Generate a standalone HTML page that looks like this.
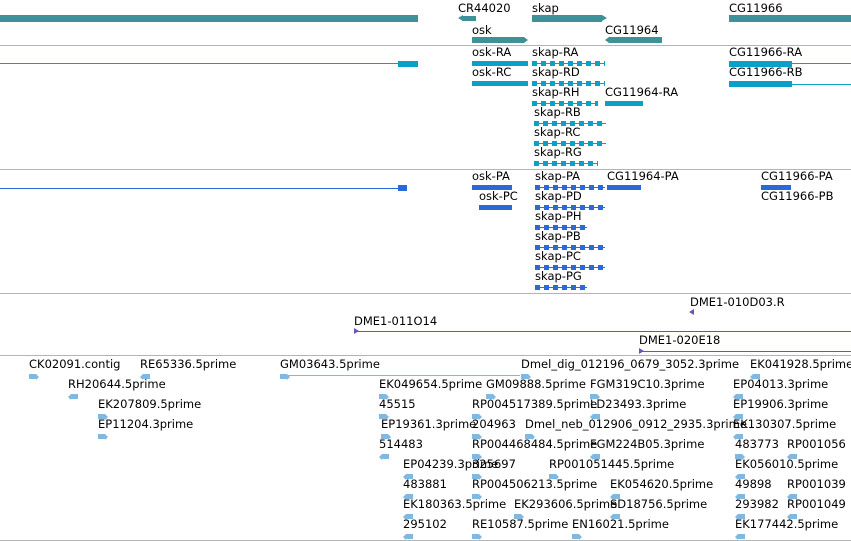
<!DOCTYPE html>
<html><head><meta charset="utf-8"><style>
*{margin:0;padding:0;box-sizing:border-box}
body{width:851px;height:541px;background:#fff;position:relative;overflow:hidden;font-family:"DejaVu Sans","Liberation Sans",sans-serif;font-size:11.5px;color:#000}
.t{position:absolute;white-space:nowrap;line-height:14px}
.b{position:absolute}
.hl{position:absolute;left:0;width:851px;height:1px;background:#b4b4b4}
.g{background:#3f9198}
.tr{background:#0aa0c8}
.p{background:#2a6ad8}
.d{background:#7050c0}
.e{background:#80b8e0}
.ar{position:absolute;width:0;height:0;border-top:3px solid transparent;border-bottom:3px solid transparent}
.ex{background:repeating-linear-gradient(90deg,currentColor 0 5px,transparent 5px 9px)}
</style></head><body>
<div class="b g" style="left:0;top:15px;width:418px;height:7px"></div>
<div class="t" style="left:458px;top:1px">CR44020</div>
<div class="b g" style="left:462px;top:16px;width:14px;height:5px"></div><div class="ar" style="left:458px;top:15px;border-right:5px solid #3f9198"></div>
<div class="t" style="left:532px;top:1px">skap</div>
<div class="b g" style="left:532px;top:15px;width:70px;height:7px"></div><div class="ar" style="left:602px;top:15px;border-top-width:3.5px;border-bottom-width:3.5px;border-left:5px solid #3f9198"></div>
<div class="t" style="left:472px;top:23px">osk</div>
<div class="b g" style="left:472px;top:37px;width:52px;height:6px"></div><div class="ar" style="left:524px;top:37px;border-left:4px solid #3f9198"></div>
<div class="t" style="left:605px;top:23px">CG11964</div>
<div class="b g" style="left:609px;top:37px;width:53px;height:6px"></div><div class="ar" style="left:605px;top:37px;border-right:4px solid #3f9198"></div>
<div class="t" style="left:729px;top:1px">CG11966</div>
<div class="b g" style="left:729px;top:15px;width:122px;height:7px"></div>
<div class="hl" style="top:45px"></div>
<div class="b tr" style="left:0;top:63px;width:400px;height:1px"></div>
<div class="b tr" style="left:398px;top:61px;width:20px;height:6px"></div>
<div class="t" style="left:472px;top:45px">osk-RA</div>
<div class="b tr" style="left:472px;top:61px;width:56px;height:5px"></div>
<div class="t" style="left:472px;top:65px">osk-RC</div>
<div class="b tr" style="left:472px;top:81px;width:56px;height:5px"></div>
<div class="t" style="left:532px;top:45px">skap-RA</div>
<div class="b tr" style="left:532px;top:63px;width:73px;height:1px"></div><div class="b ex" style="left:532px;top:61px;width:73px;height:5px;color:#0aa0c8"></div>
<div class="t" style="left:532px;top:65px">skap-RD</div>
<div class="b tr" style="left:532px;top:83px;width:73px;height:1px"></div><div class="b ex" style="left:532px;top:81px;width:73px;height:5px;color:#0aa0c8"></div>
<div class="t" style="left:532px;top:85px">skap-RH</div>
<div class="b tr" style="left:532px;top:103px;width:66px;height:1px"></div><div class="b ex" style="left:532px;top:101px;width:66px;height:5px;color:#0aa0c8"></div>
<div class="t" style="left:605px;top:85px">CG11964-RA</div>
<div class="b tr" style="left:605px;top:101px;width:38px;height:5px"></div>
<div class="t" style="left:534px;top:105px">skap-RB</div>
<div class="b tr" style="left:534px;top:123px;width:72px;height:1px"></div><div class="b ex" style="left:534px;top:121px;width:72px;height:5px;color:#0aa0c8"></div>
<div class="t" style="left:534px;top:125px">skap-RC</div>
<div class="b tr" style="left:534px;top:143px;width:72px;height:1px"></div><div class="b ex" style="left:534px;top:141px;width:72px;height:5px;color:#0aa0c8"></div>
<div class="t" style="left:534px;top:145px">skap-RG</div>
<div class="b tr" style="left:534px;top:163px;width:64px;height:1px"></div><div class="b ex" style="left:534px;top:161px;width:64px;height:5px;color:#0aa0c8"></div>
<div class="t" style="left:729px;top:45px">CG11966-RA</div>
<div class="b tr" style="left:729px;top:61px;width:63px;height:6px"></div><div class="b tr" style="left:792px;top:63px;width:59px;height:1px"></div>
<div class="t" style="left:729px;top:65px">CG11966-RB</div>
<div class="b tr" style="left:729px;top:81px;width:63px;height:6px"></div><div class="b tr" style="left:792px;top:84px;width:59px;height:1px"></div>
<div class="hl" style="top:169px"></div>
<div class="b p" style="left:0;top:188px;width:400px;height:1px"></div>
<div class="b p" style="left:398px;top:185px;width:9px;height:6px"></div>
<div class="t" style="left:472px;top:169px">osk-PA</div>
<div class="b p" style="left:472px;top:185px;width:40px;height:5px"></div>
<div class="t" style="left:479px;top:189px">osk-PC</div>
<div class="b p" style="left:479px;top:205px;width:33px;height:5px"></div>
<div class="t" style="left:535px;top:169px">skap-PA</div>
<div class="b p" style="left:535px;top:187px;width:70px;height:1px"></div><div class="b ex" style="left:535px;top:185px;width:70px;height:5px;color:#2a6ad8"></div>
<div class="t" style="left:535px;top:189px">skap-PD</div>
<div class="b p" style="left:535px;top:207px;width:70px;height:1px"></div><div class="b ex" style="left:535px;top:205px;width:70px;height:5px;color:#2a6ad8"></div>
<div class="t" style="left:535px;top:209px">skap-PH</div>
<div class="b p" style="left:535px;top:227px;width:52px;height:1px"></div><div class="b ex" style="left:535px;top:225px;width:52px;height:5px;color:#2a6ad8"></div>
<div class="t" style="left:535px;top:229px">skap-PB</div>
<div class="b p" style="left:535px;top:247px;width:70px;height:1px"></div><div class="b ex" style="left:535px;top:245px;width:70px;height:5px;color:#2a6ad8"></div>
<div class="t" style="left:535px;top:249px">skap-PC</div>
<div class="b p" style="left:535px;top:267px;width:70px;height:1px"></div><div class="b ex" style="left:535px;top:265px;width:70px;height:5px;color:#2a6ad8"></div>
<div class="t" style="left:535px;top:269px">skap-PG</div>
<div class="b p" style="left:535px;top:287px;width:52px;height:1px"></div><div class="b ex" style="left:535px;top:285px;width:52px;height:5px;color:#2a6ad8"></div>
<div class="t" style="left:607px;top:169px">CG11964-PA</div>
<div class="b p" style="left:607px;top:185px;width:34px;height:5px"></div>
<div class="t" style="left:761px;top:169px">CG11966-PA</div>
<div class="b p" style="left:761px;top:185px;width:30px;height:5px"></div>
<div class="t" style="left:761px;top:189px">CG11966-PB</div>
<div class="hl" style="top:293px"></div>
<div class="t" style="left:690px;top:295px">DME1-010D03.R</div>
<div class="ar" style="left:689px;top:309px;border-right:5px solid #7050c0"></div>
<div class="t" style="left:354px;top:314px">DME1-011O14</div>
<div class="b d" style="left:354px;top:331px;width:497px;height:1px"></div><div class="ar" style="left:354px;top:328px;border-left:5px solid #7050c0"></div>
<div class="t" style="left:639px;top:333px">DME1-020E18</div>
<div class="b d" style="left:639px;top:351px;width:212px;height:1px"></div><div class="ar" style="left:639px;top:348px;border-left:5px solid #7050c0"></div>
<div class="hl" style="top:355px"></div>
<div class="hl" style="top:540px"></div>
<div class="b e" style="left:280px;top:375px;width:240px;height:1px"></div>
<div id="est"></div>
<script>
var rows=[
[[29,"CK02091.contig",1],[140,"RE65336.5prime",0],[280,"GM03643.5prime",1],[521,"Dmel_dig_012196_0679_3052.3prime",1],[750,"EK041928.5prime",0]],
[[68,"RH20644.5prime",0],[379,"EK049654.5prime",1],[486,"GM09888.5prime",1],[590,"FGM319C10.3prime",1],[733,"EP04013.3prime",0]],
[[98,"EK207809.5prime",1],[379,"45515",1],[472,"RP004517389.5prime",1],[590,"LD23493.3prime",0],[733,"EP19906.3prime",0]],
[[98,"EP11204.3prime",1],[381,"EP19361.3prime",1],[472,"204963",1],[525,"Dmel_neb_012906_0912_2935.3prime",1],[733,"EK130307.5prime",0]],
[[379,"514483",0],[472,"RP004468484.5prime",1],[590,"FGM224B05.3prime",0],[735,"483773",1],[787,"RP001056",0]],
[[403,"EP04239.3prime",0],[472,"325697",1],[549,"RP001051445.5prime",1],[735,"EK056010.5prime",0]],
[[403,"483881",0],[472,"RP004506213.5prime",1],[610,"EK054620.5prime",0],[735,"49898",0],[787,"RP001039",0]],
[[403,"EK180363.5prime",0],[514,"EK293606.5prime",1],[610,"SD18756.5prime",0],[735,"293982",0],[787,"RP001049",0]],
[[403,"295102",0],[472,"RE10587.5prime",1],[572,"EN16021.5prime",1],[735,"EK177442.5prime",0]]];
var h="";
rows.forEach(function(r,i){var y=357+i*20;r.forEach(function(e){
h+='<div class="t" style="left:'+e[0]+'px;top:'+y+'px">'+e[1]+'</div>';
var ay=y+17;
if(e[2])h+='<div class="b e" style="left:'+e[0]+'px;top:'+ay+'px;width:7px;height:5px"></div><div class="ar" style="left:'+(e[0]+7)+'px;top:'+(ay-0.5)+'px;border-left:3px solid #80b8e0"></div>';
else h+='<div class="ar" style="left:'+e[0]+'px;top:'+(ay-0.5)+'px;border-right:3px solid #80b8e0"></div><div class="b e" style="left:'+(e[0]+3)+'px;top:'+ay+'px;width:7px;height:5px"></div>';
});});
document.getElementById("est").innerHTML=h;
</script>
</body></html>
